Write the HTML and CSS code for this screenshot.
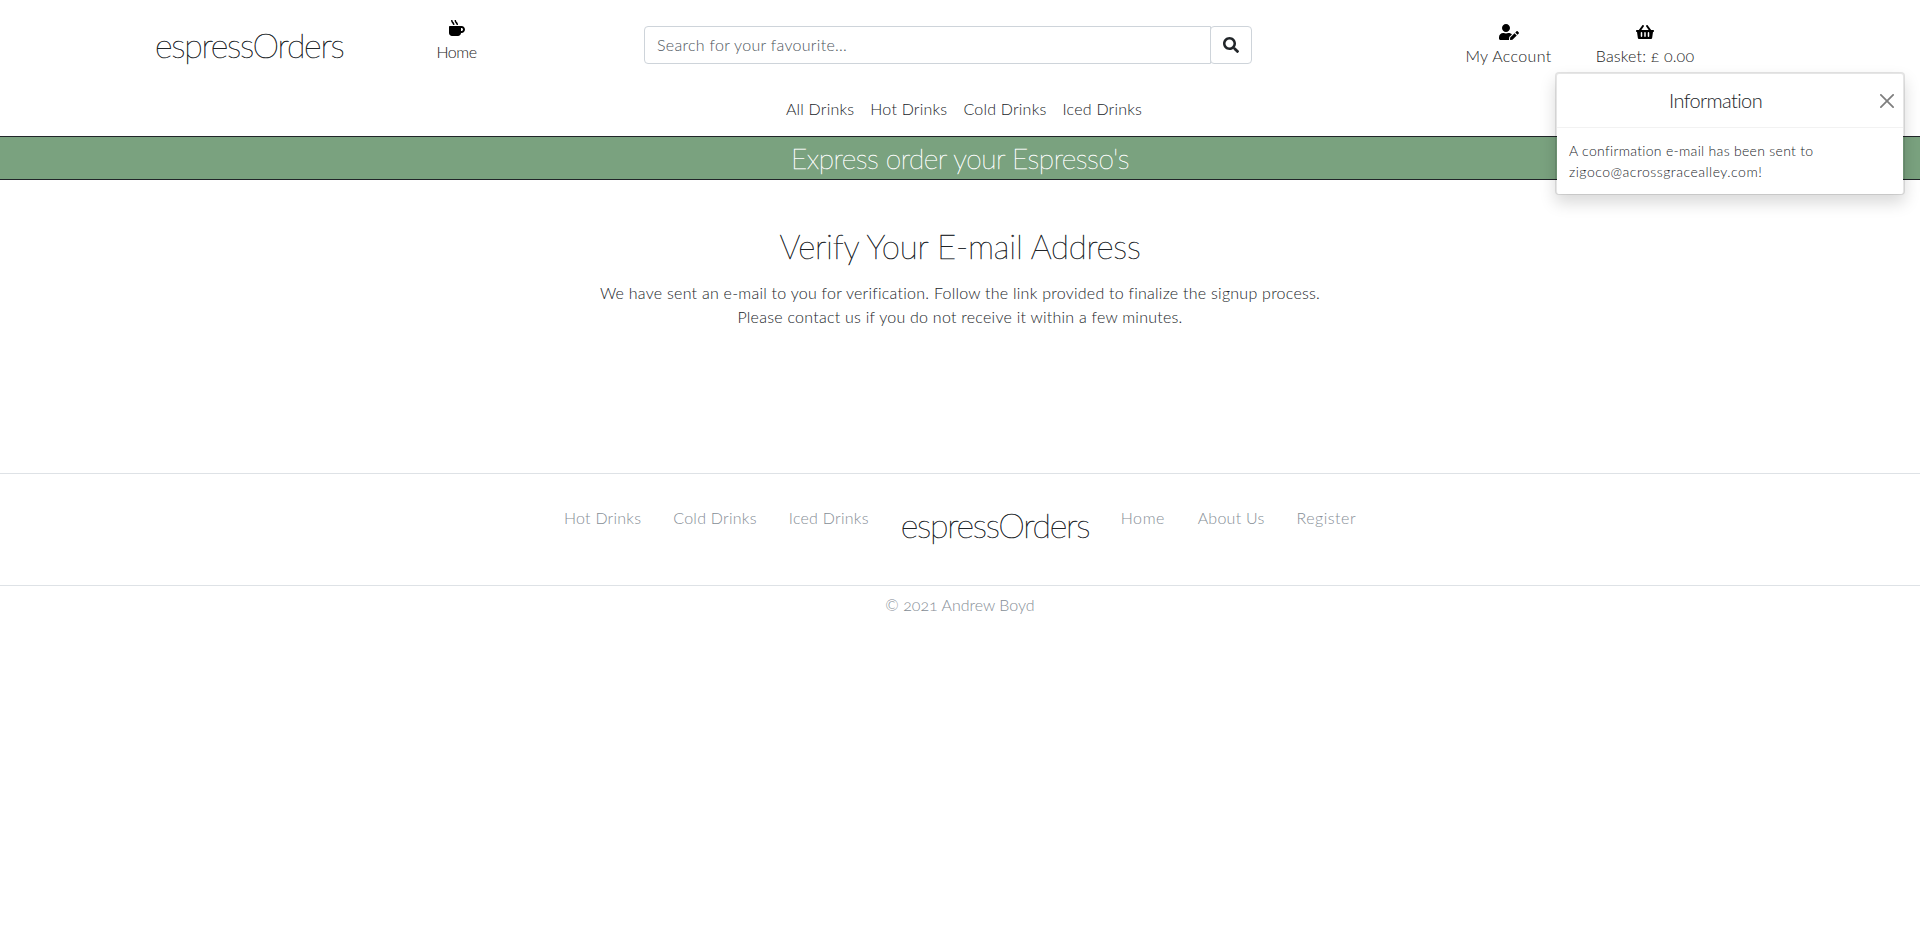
FILE: index.html
```
<!DOCTYPE html>
<html lang="en">
<head>
<meta charset="utf-8">
<title>espressOrders</title>
<link rel="stylesheet" href="styles.css">
</head>
<body>
<header class="header">
  <div class="top">
    <a class="logo">espressOrders</a>
    <a class="action home">
      <svg width="16" height="16" viewBox="0 0 512 512"><path d="M127.1 146.5c1.3 7.7 8 13.5 16 13.5h16.5c9.8 0 17.6-8.5 16.3-18-3.8-28.2-16.4-54.2-36.6-74.7-14.4-14.7-23.6-33.3-26.4-53.5C111.8 5.9 105 0 96.8 0H80.4C70.6 0 63 8.5 64.1 18c3.9 31.9 18 61.3 40.6 84.4 12 12.2 19.7 27.5 22.4 44.1zm112 0c1.3 7.7 8 13.5 16 13.5h16.5c9.8 0 17.6-8.5 16.3-18-3.8-28.2-16.4-54.2-36.6-74.7-14.4-14.7-23.6-33.3-26.4-53.5C223.8 5.9 217 0 208.8 0h-16.4c-9.8 0-17.5 8.5-16.3 18 3.9 31.9 18 61.3 40.6 84.4 12 12.2 19.7 27.5 22.4 44.1zM400 192H32c-17.7 0-32 14.3-32 32v192c0 53 43 96 96 96h192c53 0 96-43 96-96h16c61.8 0 112-50.2 112-112s-50.2-112-112-112zm0 160h-16v-96h16c26.5 0 48 21.5 48 48s-21.5 48-48 48z"/></svg>
      <span>Home</span>
    </a>
    <form class="search">
      <input class="search-input" type="text" placeholder="Search for your favourite...">
      <button class="search-btn" type="button" aria-label="Search">
        <svg width="16" height="16" viewBox="0 0 512 512"><path d="M505 442.7L405.3 343c-4.5-4.5-10.6-7-17-7H372c27.6-35.3 44-79.7 44-128C416 93.1 322.9 0 208 0S0 93.1 0 208s93.1 208 208 208c48.3 0 92.7-16.4 128-44v16.3c0 6.4 2.5 12.5 7 17l99.7 99.7c9.4 9.4 24.6 9.4 33.9 0l28.3-28.3c9.4-9.4 9.4-24.6.1-34zM208 336c-70.7 0-128-57.2-128-128 0-70.7 57.2-128 128-128 70.7 0 128 57.2 128 128 0 70.7-57.2 128-128 128z"/></svg>
      </button>
    </form>
    <a class="action account">
      <svg width="20" height="16" viewBox="0 0 640 512"><path d="M224 256c70.7 0 128-57.3 128-128S294.7 0 224 0 96 57.3 96 128s57.3 128 128 128zm89.6 32h-16.7c-22.2 10.2-46.9 16-72.9 16s-50.6-5.8-72.9-16h-16.7C60.2 288 0 348.2 0 422.4V464c0 26.5 21.5 48 48 48h274.9c-2.4-6.8-3.4-14-2.6-21.3l6.8-60.9 1.2-11.1 7.9-7.9 77.3-77.3c-24.5-27.7-60-45.5-99.9-45.5zm45.3 145.3l-6.8 61c-1.1 10.2 7.5 18.8 17.6 17.6l60.9-6.8 137.9-137.9-71.7-71.7-137.9 137.8zM633 268.9L595.1 231c-9.3-9.3-24.5-9.3-33.8 0l-37.8 37.8-4.1 4.1 71.8 71.7 41.8-41.8c9.3-9.4 9.3-24.5 0-33.9z"/></svg>
      <span>My Account</span>
    </a>
    <a class="action basket">
      <svg width="18" height="16" viewBox="0 0 576 512"><path d="M576 216v16c0 13.255-10.745 24-24 24h-8l-26.113 182.788C514.509 462.435 494.257 480 470.37 480H105.63c-23.887 0-44.139-17.565-47.518-41.212L32 256h-8c-13.255 0-24-10.745-24-24v-16c0-13.255 10.745-24 24-24h67.341l106.78-146.821c10.395-14.292 30.407-17.453 44.701-7.058 14.293 10.395 17.453 30.408 7.058 44.701L170.477 192h235.046L326.12 82.821c-10.395-14.292-7.234-34.306 7.059-44.701 14.291-10.395 34.306-7.235 44.701 7.058L484.659 192H552c13.255 0 24 10.745 24 24zM312 392V280c0-13.255-10.745-24-24-24s-24 10.745-24 24v112c0 13.255 10.745 24 24 24s24-10.745 24-24zm112 0V280c0-13.255-10.745-24-24-24s-24 10.745-24 24v112c0 13.255 10.745 24 24 24s24-10.745 24-24zm-224 0V280c0-13.255-10.745-24-24-24s-24 10.745-24 24v112c0 13.255 10.745 24 24 24s24-10.745 24-24z"/></svg>
      <span>Basket: £ 0.00</span>
    </a>
  </div>
  <nav class="nav">
    <a>All Drinks</a><a>Hot Drinks</a><a>Cold Drinks</a><a>Iced Drinks</a>
  </nav>
</header>
<div class="banner">Express order your Espresso's</div>
<main class="main">
  <h2 class="title">Verify Your E-mail Address</h2>
  <p class="text">We have sent an e-mail to you for verification. Follow the link provided to finalize the signup process.<br>Please contact us if you do not receive it within a few minutes.</p>
</main>
<footer class="footer">
  <div class="links">
    <a>Hot Drinks</a><a>Cold Drinks</a><a>Iced Drinks</a>
    <a class="logo">espressOrders</a>
    <a class="f-home">Home</a><a>About Us</a><a class="f-register">Register</a>
  </div>
  <div class="copy">© 2021 Andrew Boyd</div>
</footer>
<aside class="toast">
  <div class="toast-head">
    <span class="toast-title">Information</span>
    <svg class="close" width="14" height="14" viewBox="0 0 16 16"><path d="M.293.293a1 1 0 011.414 0L8 6.586 14.293.293a1 1 0 111.414 1.414L9.414 8l6.293 6.293a1 1 0 01-1.414 1.414L8 9.414l-6.293 6.293a1 1 0 01-1.414-1.414L6.586 8 .293 1.707a1 1 0 010-1.414z"/></svg>
  </div>
  <div class="toast-body"><span class="line-a">A confirmation e-mail has been sent to</span> <span class="line-b">zigoco@acrossgracealley.com!</span></div>
</aside>
</body>
</html>
```
FILE: styles.css
```
* { box-sizing: border-box; }
body {
  margin: 0;
  background: #fff;
  color: #212529;
  font: 300 16px/24px Lato, "Open Sans", sans-serif;
  font-variant-numeric: oldstyle-nums;
}
svg { display: block; }
a { white-space: nowrap; }

.logo {
  font-size: 34px;
  line-height: 44px;
  font-weight: 100;
  letter-spacing: -1.25px;
  width: 188px;
  -webkit-text-stroke: .5px #212529;
}

.header { height: 136px; }
.top { display: flex; align-items: flex-start; height: 97px; padding: 20px 0 0 155px; }
.top .logo { padding-top: 3px; }
.action { display: flex; flex-direction: column; align-items: center; gap: 4px; color: #222; }
.action svg { fill: #000; }
.home { width: 39px; margin-left: 94px; letter-spacing: -.5px; }
.account { width: 85px; margin: 4px 0 0 214px; letter-spacing: .35px; }
.basket { width: 98px; margin: 4px 0 0 45px; letter-spacing: .15px; }

.search { display: flex; width: 608px; height: 38px; margin: 6px 0 0 168px; }
.search-input {
  width: 567px;
  padding: 0 12px 2px;
  border: 1px solid #ced4da;
  border-radius: 4px 0 0 4px;
  font: 300 16px Lato, sans-serif;
  letter-spacing: .3px;
}
.search-input::placeholder { color: #4d555d; }
.search-btn {
  display: flex;
  align-items: center;
  justify-content: center;
  width: 42px;
  margin-left: -1px;
  padding: 0 0 1px;
  border: 1px solid #ced4da;
  border-radius: 4px;
  background: #fff;
}
.search-btn svg { fill: #212529; }

.nav { display: flex; justify-content: center; gap: 16px; padding-left: 8px; letter-spacing: .22px; }

.banner {
  height: 44px;
  border: solid #212529;
  border-width: 1px 0;
  background: #7aa27f;
  color: #fff;
  font-size: 28px;
  line-height: 42px;
  font-weight: 100;
  letter-spacing: -.45px;
  text-align: center;
  -webkit-text-stroke: .4px #fff;
}

.main { height: 293px; padding-top: 46px; text-align: center; }
.title {
  margin: 0 0 15px;
  font-size: 33px;
  line-height: 40px;
  font-weight: 100;
  letter-spacing: -.22px;
  -webkit-text-stroke: .5px #212529;
}
.text { margin: 0; letter-spacing: .25px; }

.footer { color: #868e96; }
.links {
  display: flex;
  justify-content: center;
  gap: 32px;
  height: 113px;
  padding-top: 32px;
  border: solid #dee2e6;
  border-width: 1px 0;
  letter-spacing: .25px;
}
.links .logo { color: #212529; margin-top: -3px; }
.f-home { width: 45px; letter-spacing: .6px; }
.f-register { letter-spacing: .5px; }
.copy { padding-top: 7px; text-align: center; }

.toast {
  position: absolute;
  top: 72px;
  right: 15px;
  width: 350px;
  border: 2px solid rgba(0, 0, 0, .1);
  border-bottom-width: 1px;
  border-radius: 4px;
  background: #fff;
  background-clip: padding-box;
  box-shadow: 0 8px 16px rgba(0, 0, 0, .15);
}
.toast-head {
  display: flex;
  align-items: center;
  height: 54px;
  padding-right: 9px;
  border-bottom: 1px solid rgba(0, 0, 0, .05);
}
.toast-title { flex: 1; padding: 0 6px 2px 0; font-size: 20px; letter-spacing: -.6px; text-align: center; }
.close { opacity: .5; }
.toast-body { padding: 12px; font-size: 14px; line-height: 21px; }
.line-a { letter-spacing: .3px; }
.line-b { display: block; letter-spacing: .5px; }
```
